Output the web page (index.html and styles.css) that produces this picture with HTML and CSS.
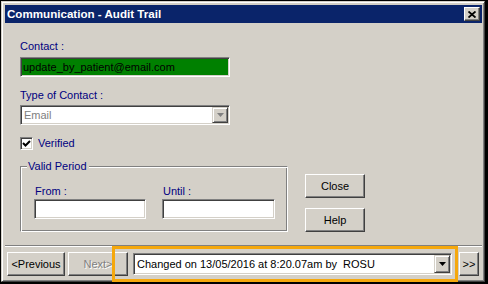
FILE: index.html
```html
<!DOCTYPE html>
<html lang="en">
<head>
    <meta charset="UTF-8">
    <title>Communication - Audit Trail</title>
    <link rel="stylesheet" href="styles.css">
</head>
<body>

<div class="window">
    <div class="titlebar">
        <span class="title">Communication - Audit Trail</span>
        <button class="close-x">
            <svg width="8" height="7" viewBox="0 0 8 7"><path d="M0.5 0.5 L7.5 6.5 M7.5 0.5 L0.5 6.5" stroke="#000" stroke-width="1.8" fill="none"/></svg>
        </button>
    </div>

    <div class="content">
        <div class="label first">Contact :</div>
        <div class="field wide green">update_by_patient@email.com</div>

        <div class="label">Type of Contact :</div>
        <div class="combo wide disabled">
            <span class="combo-text">Email</span>
            <span class="drop-btn">
                <svg width="7" height="4" viewBox="0 0 7 4"><path d="M0 0 H7 L3.5 4 Z" fill="#808080"/></svg>
            </span>
        </div>

        <div class="check-row">
            <span class="checkbox">
                <svg width="9" height="9" viewBox="0 0 9 9"><path d="M1 4 L3.5 6.5 L8 2" stroke="#000" stroke-width="2" fill="none"/></svg>
            </span>
            <span class="check-label">Verified</span>
        </div>

        <div class="period-row">
            <div class="group">
                <span class="group-title">Valid Period</span>
                <div class="dates">
                    <div class="date-col">
                        <div class="label small">From :</div>
                        <div class="field date-from"></div>
                    </div>
                    <div class="date-col">
                        <div class="label small">Until :</div>
                        <div class="field date-until"></div>
                    </div>
                </div>
            </div>
            <div class="side-buttons">
                <button class="btn">Close</button>
                <button class="btn">Help</button>
            </div>
        </div>
    </div>

    <div class="footer">
        <div class="separator"></div>
        <div class="nav-row">
            <button class="btn prev">&lt;Previous</button>
            <button class="btn next" disabled>Next&gt;</button>
            <div class="combo history">
                <span class="combo-text">Changed on 13/05/2016 at 8:20.07am by&nbsp; ROSU</span>
                <span class="drop-btn">
                    <svg width="7" height="4" viewBox="0 0 7 4"><path d="M0 0 H7 L3.5 4 Z" fill="#000"/></svg>
                </span>
            </div>
            <button class="btn last">&gt;&gt;</button>
        </div>
    </div>

    <div class="highlight"></div>
</div>

</body>
</html>
```

FILE: styles.css
```css
body {
    margin: 0;
    background: #000;
    font-family: "Liberation Sans", Arial, sans-serif;
    font-size: 11px;
}
.window {
    position: relative;
    margin: 1px 0 0 1px;
    width: 484px;
    height: 281px;
    box-sizing: border-box;
    background: #d4d0c8;
    border: 1px solid;
    border-color: #d4d0c8 #404040 #404040 #d4d0c8;
    box-shadow: inset 1px 1px #fff, inset -1px -1px #808080;
    padding: 3px 2px 0 3px;
}
.titlebar {
    height: 18px;
    background: #0a246a;
    display: flex;
    align-items: center;
    justify-content: space-between;
}
.title {
    padding-left: 2px;
    color: #fff;
    font-weight: bold;
    font-size: 11.6px;
    line-height: 18px;
}
.close-x {
    width: 16px;
    height: 14px;
    margin-right: 2px;
    padding: 0;
    display: flex;
    align-items: center;
    justify-content: center;
    background: #d4d0c8;
    border: 1px solid;
    border-color: #fff #404040 #404040 #fff;
    box-shadow: inset -1px -1px #808080;
}
.content {
    padding-left: 15px;
}
.label {
    color: #000080;
    line-height: 13px;
    height: 13px;
    margin-top: 12px;
}
.label.first {
    margin-top: 17px;
}
.label.small {
    margin-top: 0;
    padding-left: 1px;
}
.field, .combo {
    box-sizing: border-box;
    height: 20px;
    background: #fff;
    border: 1px solid;
    border-color: #808080 #fff #fff #808080;
    box-shadow: inset 1px 1px #404040, inset -1px -1px #d4d0c8;
}
.wide {
    width: 210px;
}
.field.green {
    margin-top: 4px;
    background: #008000;
    color: #000;
    padding-left: 2px;
    line-height: 18px;
}
.combo {
    margin-top: 3px;
    display: flex;
    align-items: center;
    justify-content: space-between;
    padding: 1px;
}
.combo-text {
    padding-left: 2px;
    line-height: 16px;
}
.combo.disabled .combo-text {
    color: #808080;
}
.drop-btn {
    box-sizing: border-box;
    width: 16px;
    height: 16px;
    display: flex;
    align-items: center;
    justify-content: center;
    background: #d4d0c8;
    border: 1px solid;
    border-color: #d4d0c8 #404040 #404040 #d4d0c8;
    box-shadow: inset 1px 1px #fff, inset -1px -1px #808080;
}
.check-row {
    margin-top: 12px;
    display: flex;
    align-items: center;
    height: 13px;
}
.checkbox {
    box-sizing: border-box;
    width: 13px;
    height: 13px;
    display: flex;
    align-items: center;
    justify-content: center;
    background: #fff;
    border: 1px solid;
    border-color: #808080 #fff #fff #808080;
    box-shadow: inset 1px 1px #404040, inset -1px -1px #d4d0c8;
}
.check-label {
    margin-left: 5px;
    color: #000080;
    line-height: 13px;
}
.period-row {
    margin-top: 16px;
    display: flex;
    align-items: flex-start;
}
.group {
    position: relative;
    box-sizing: border-box;
    width: 268px;
    height: 66px;
    border: 1px solid;
    border-color: #808080 #fff #fff #808080;
    box-shadow: inset 1px 1px #fff, inset -1px -1px #808080;
    padding: 18px 10px 0 13px;
}
.group-title {
    position: absolute;
    top: -7px;
    left: 6px;
    padding: 0 2px 0 1px;
    background: #d4d0c8;
    color: #000080;
    line-height: 13px;
}
.dates {
    display: flex;
    gap: 16px;
}
.field.date-from {
    margin-top: 1px;
    width: 112px;
}
.field.date-until {
    margin-top: 1px;
    width: 113px;
}
.side-buttons {
    margin-left: 17px;
    padding-top: 8px;
    display: flex;
    flex-direction: column;
    gap: 10px;
}
.btn {
    box-sizing: border-box;
    width: 60px;
    height: 24px;
    padding: 0;
    font-family: "Liberation Sans", Arial, sans-serif;
    font-size: 11px;
    color: #000;
    background: #d4d0c8;
    border: 1px solid;
    border-color: #fff #404040 #404040 #fff;
    box-shadow: inset -1px -1px #808080;
}
.btn:disabled {
    color: #808080;
    text-shadow: 1px 1px #fff;
}
.footer {
    margin-top: 13px;
}
.separator {
    height: 1px;
    background: #808080;
    border-bottom: 1px solid #fff;
}
.nav-row {
    margin-top: 5px;
    padding-left: 2px;
    display: flex;
    align-items: flex-start;
}
.btn.prev {
    width: 58px;
}
.btn.next {
    margin-left: 3px;
}
.combo.history {
    margin-top: 1px;
    margin-left: 5px;
    width: 319px;
    height: 22px;
    padding: 1px;
}
.combo.history .combo-text {
    color: #000;
    padding-left: 2px;
}
.combo.history .drop-btn {
    height: 18px;
}
.btn.last {
    margin-left: 7px;
    width: 20px;
}
.highlight {
    position: absolute;
    left: 110px;
    top: 244px;
    width: 346px;
    height: 36px;
    box-sizing: border-box;
    border: 3px solid #f5a80d;
}
```
